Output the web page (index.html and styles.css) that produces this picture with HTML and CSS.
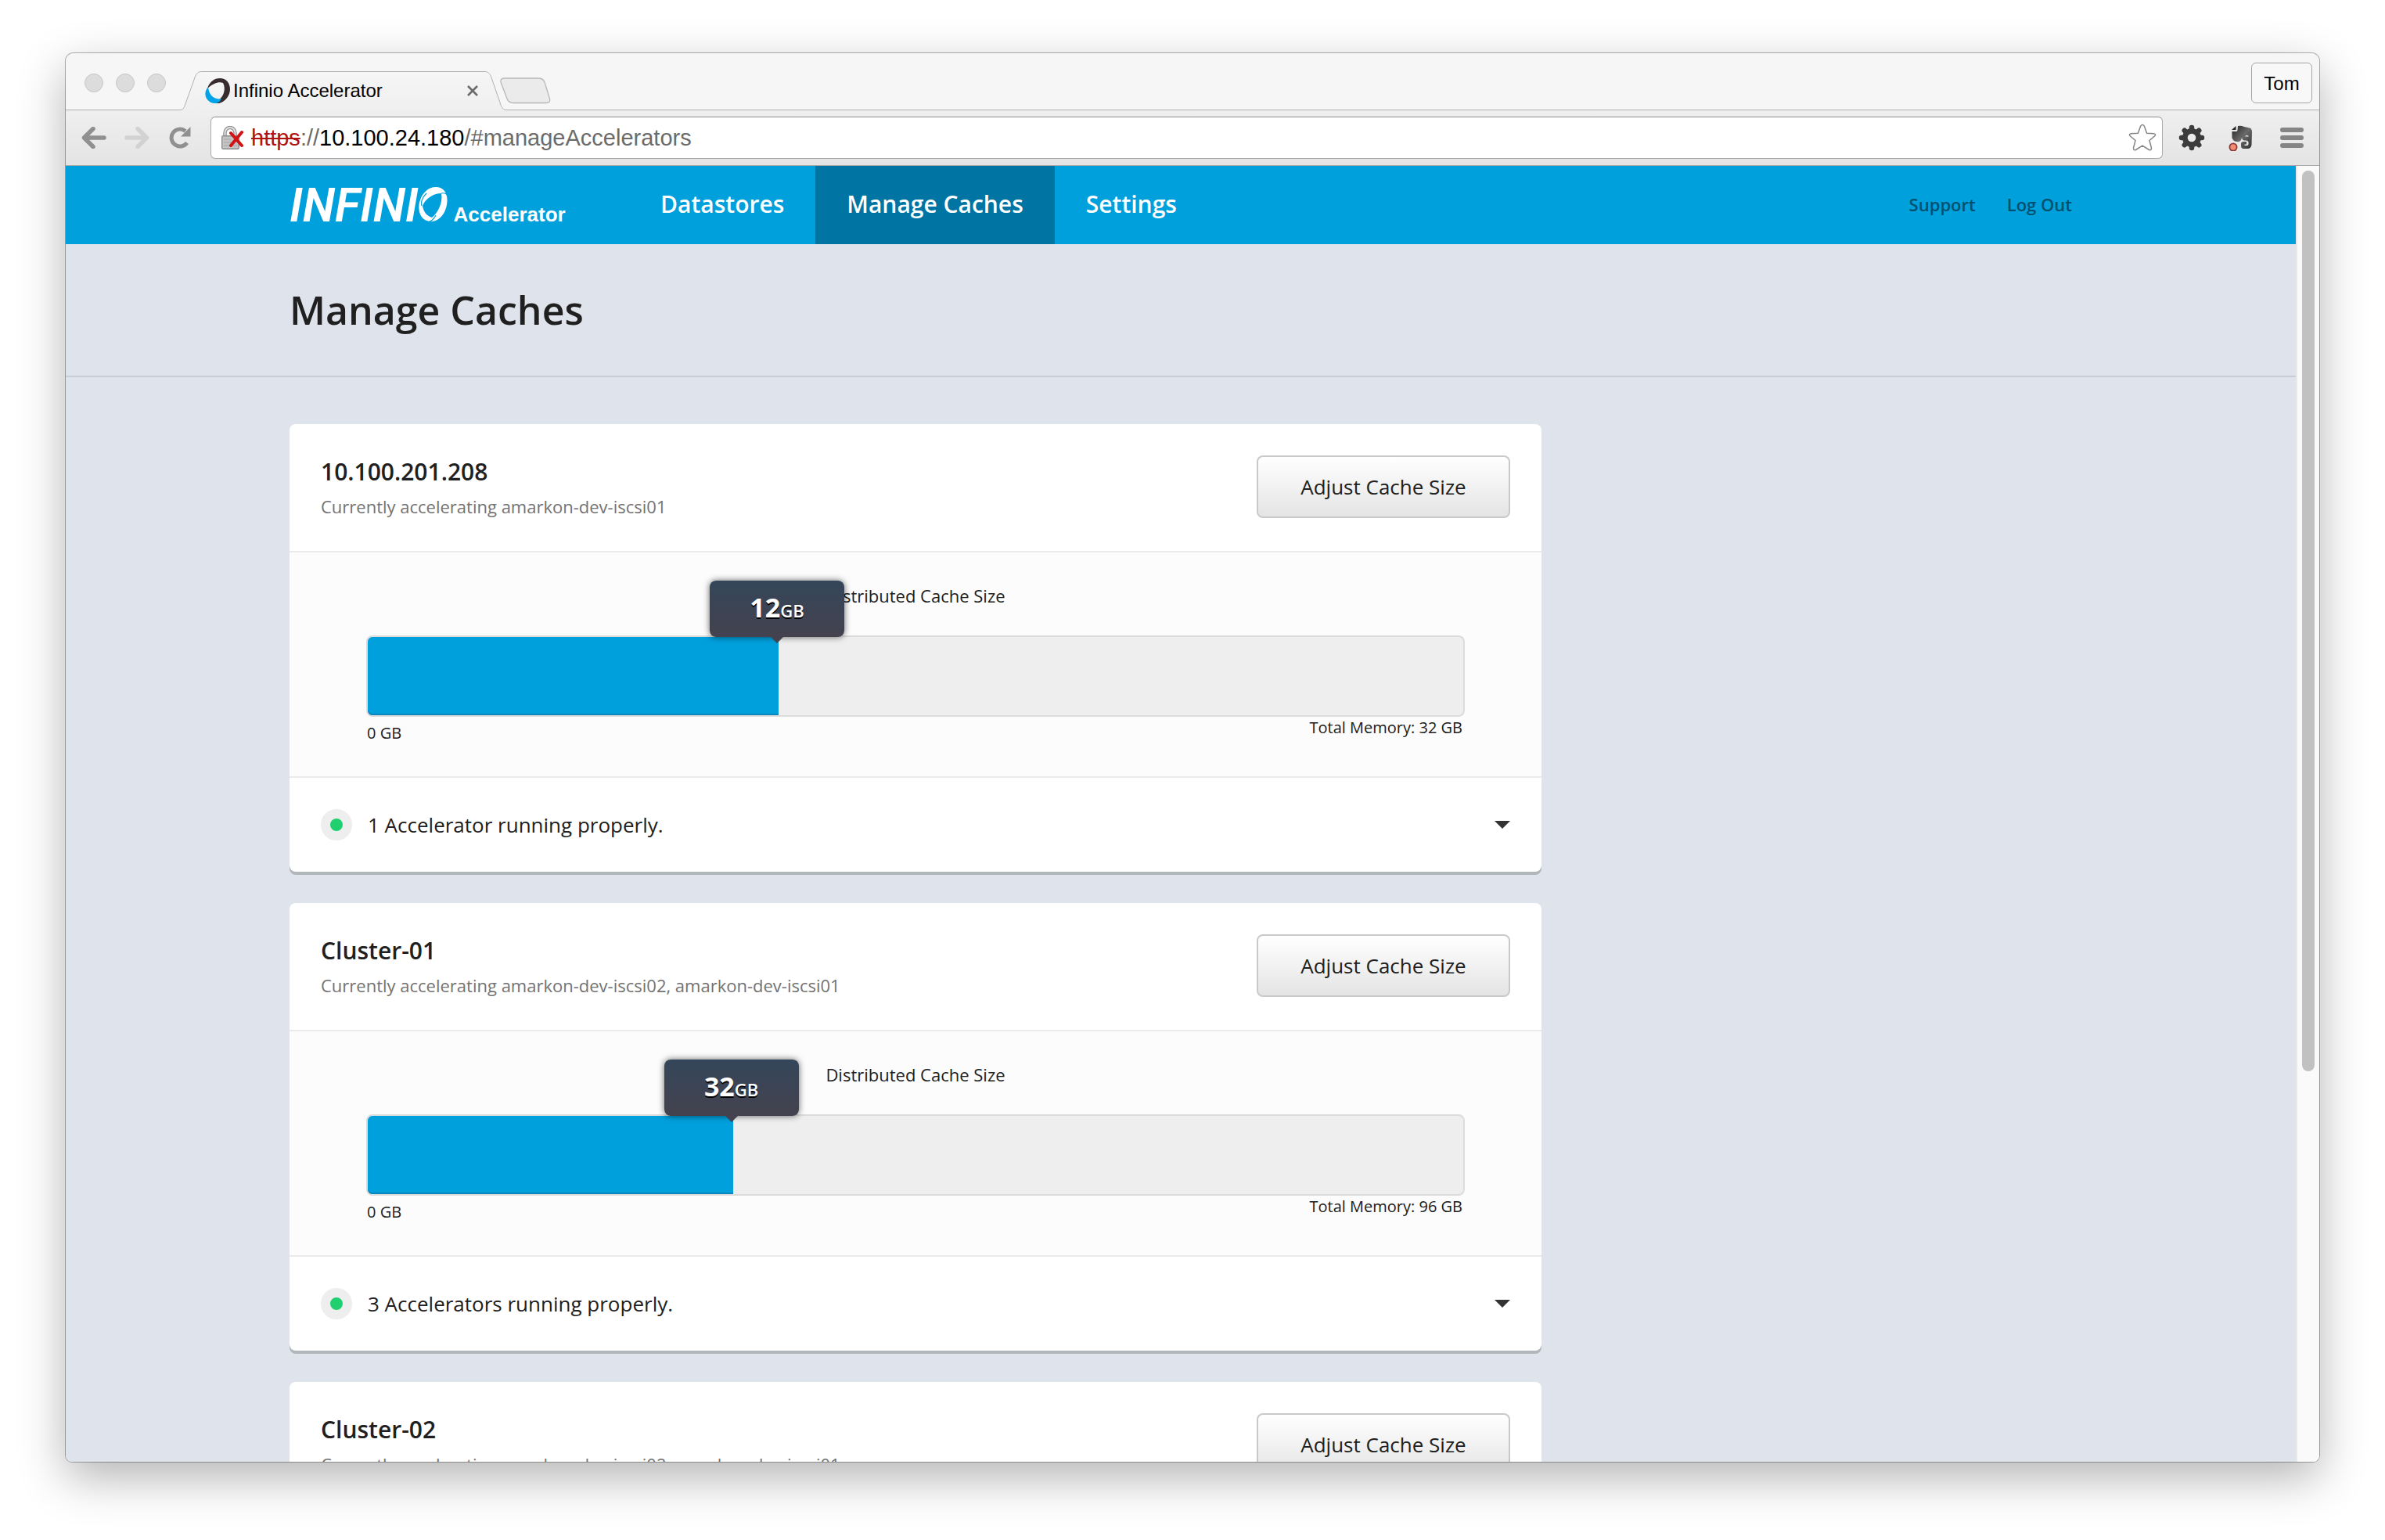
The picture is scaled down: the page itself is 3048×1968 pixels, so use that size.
FILE: index.html
```html
<!DOCTYPE html>
<html lang="en">
<head>
<meta charset="utf-8">
<title>Infinio Accelerator</title>
<link rel="stylesheet" href="styles.css">
</head>
<body>
<div class="window">
  <div class="tabstrip">
    <div class="lights"><i class="light"></i><i class="light"></i><i class="light"></i></div>
    <div class="tab">
      <svg class="tab-shape" viewBox="0 0 418 50" preserveAspectRatio="none" aria-hidden="true">
        <defs><linearGradient id="tabFill" x1="0" y1="0" x2="0" y2="1"><stop offset="0" stop-color="#f6f6f6"/><stop offset="1" stop-color="#efefef"/></linearGradient></defs>
        <path d="M0 50V49.500C4 49.500 5 47 6.500 43L19 8C21 3 23 .5 28 .5H389C394 .5 396 3 398 8L410 43C411.500 47 413 49.500 418 49.500V50Z" fill="url(#tabFill)"/>
        <path d="M0 49.500C4 49.500 5 47 6.500 43L19 8C21 3 23 .5 28 .5H389C394 .5 396 3 398 8L410 43C411.500 47 413 49.500 418 49.500" fill="none" stroke="#b0b0b0"/>
      </svg>
      <div class="tab-content">
        <svg class="favicon" viewBox="0 0 32 32" aria-hidden="true">
          <path d="M3 13C6 4 12 0 19 0C27 0 32 6 32 14C32 22 26 30 18 32H13L17 28C24 24 27 13 23 6C18 4 11 6 3 13Z" fill="#372b2d"/>
          <path d="M4 11C-2 18 0 26 6 30C10 33 15 32 17 31C19 30 20 28 21 26C12 28 5 22 4 11Z" fill="#00a3e8"/>
        </svg>
        <span class="tab-title">Infinio Accelerator</span>
        <button class="tab-close" aria-label="Close tab"><svg viewBox="0 0 14 14"><path d="M1 1L13 13M13 1L1 13" stroke="#6b6b6b" stroke-width="2.600"/></svg></button>
      </div>
    </div>
    <button class="new-tab" aria-label="New tab"><svg viewBox="0 0 66 34"><path d="M7 1H50Q56 1 58 6L64.500 27Q66 32.500 60 32.500H18Q12 32.500 10 27L2 6Q1 1 7 1Z" fill="#ebebeb" stroke="#b8b8b8" stroke-width="1.300"/></svg></button>
    <button class="profile">Tom</button>
  </div>

  <div class="toolbar">
    <button class="tool" aria-label="Back"><svg viewBox="0 0 32 28"><path d="M15 2.500L3.500 14L15 25.500M4 14H29" fill="none" stroke="#909090" stroke-width="5.500" stroke-linecap="round" stroke-linejoin="round"/></svg></button>
    <button class="tool" aria-label="Forward"><svg viewBox="0 0 32 28"><path d="M17 2.500L28.500 14L17 25.500M28 14H3" fill="none" stroke="#d2d2d2" stroke-width="5.500" stroke-linecap="round" stroke-linejoin="round"/></svg></button>
    <button class="tool" aria-label="Reload"><svg viewBox="0 0 32 28"><path d="M25 20.500A11 11 0 1 1 23 5.500" fill="none" stroke="#909090" stroke-width="5"/><path d="M29.500 0V12.500H17Z" fill="#909090"/></svg></button>
    <div class="omnibox">
      <svg class="lock" viewBox="0 0 28 30" aria-hidden="true">
        <path d="M4.500 13V9A6.500 7 0 0 1 17.500 9V13" fill="none" stroke="#8d8d8d" stroke-width="4.500"/>
        <path d="M4.500 13V9A6.500 7 0 0 1 17.500 9V13" fill="none" stroke="#e2e2e2" stroke-width="2"/>
        <rect x=".7" y="12.700" width="21.600" height="16.600" rx="1.500" fill="#c4c4c4" stroke="#8d8d8d" stroke-width="1.400"/>
        <path d="M3 17H12M3 21H12M3 25H20" stroke="#b0b0b0" stroke-width="1.500"/>
        <path d="M12 9L26 25M26 8L12 25" stroke="#d01414" stroke-width="4" stroke-linecap="round"/>
      </svg>
      <div class="url" role="textbox" aria-label="Address"><s class="scheme">https</s>://<b class="host">10.100.24.180</b>/#manageAccelerators</div>
      <button class="star" aria-label="Bookmark"><svg viewBox="0 0 36 36"><path d="M18 1.500Q19.800 1.500 20.500 3.500L23.600 12.300L32.500 12.800Q36 13.500 33.500 16L27 21.500L29.500 31Q29.500 34.800 26.500 33.500L18 28.200L9.500 33.500Q6.500 34.800 6.500 31L9 21.500L2.500 16Q0 13.500 3.500 12.800L12.400 12.300L15.500 3.500Q16.200 1.500 18 1.500Z" fill="#fff" stroke="#858585" stroke-width="1.500"/></svg></button>
    </div>
    <button class="ext" aria-label="Settings extension"><svg viewBox="0 0 34 34"><g stroke="#3c3c3c" stroke-width="6.500" stroke-linecap="round"><path d="M17 4V30M4 17H30M7.800 7.800L26.200 26.200M26.200 7.800L7.800 26.200"/></g><circle cx="17" cy="17" r="12" fill="#3c3c3c"/><circle cx="17" cy="17" r="5.300" fill="#ebebeb"/></svg></button>
    <button class="ext" aria-label="Evernote"><svg viewBox="2 0 34 34">
      <defs><linearGradient id="eleph" x1="0" x2="1" y1="0" y2="1"><stop offset="0" stop-color="#222"/><stop offset=".5" stop-color="#6a6a6a"/><stop offset="1" stop-color="#303030"/></linearGradient></defs>
      <path d="M14 2Q18 1 22 3L29 4.500Q32 5 32 10L31.500 26Q31 31 26 31H21Q18 31 18 27V24.500Q18 22 21 22H25V25.500H22.500V27H25.500Q28 27 27.500 23Q27 20 23 20.500Q20 21 19 17Q18 23 13 22Q8 22 6.500 17V9H12Q13.500 9 13.500 7Z" fill="url(#eleph)"/>
      <path d="M11.500 2V7H6Z" fill="#222"/><path d="M23 15.500Q25.500 12 28 15.500Z" fill="#eee"/>
      <circle cx="8" cy="29" r="4.600" fill="#f48a72" stroke="#8a3a34" stroke-width="1.800"/>
    </svg></button>
    <button class="ext" aria-label="Menu"><svg viewBox="0 0 34 34"><path d="M5 7H29M5 17H29M5 27H29" stroke="#858585" stroke-width="6" stroke-linecap="round"/></svg></button>
  </div>

  <div class="viewport">
    <div class="page">
      <header class="site-header">
        <div class="container site-bar">
          <a class="logo" href="#home">
            <span class="logo-name">INFINI</span>
            <svg class="logo-mark" viewBox="0 0 37 44" role="img" aria-label="O">
              <path fill-rule="evenodd" fill="#fff" d="M22 0C32 0 37 8 36.500 18C36 32 27 44 16 44C5 44 0 35 .3 25C1 12 10 0 22 0ZM29 8C20 8 9 14 5 24C6 31 10 37 17 39C25 33 31 20 29 8Z"/>
              <path d="M4 24Q2 16 10 8M29 8Q34 7 36.500 10M22 36Q19 42 14 44" fill="none" stroke="#00a0dd" stroke-width="1.200"/>
            </svg>
            <span class="logo-product">Accelerator</span>
          </a>
          <nav class="nav">
            <a class="nav-link" href="#datastores">Datastores</a>
            <a class="nav-link nav-link-active" href="#manageAccelerators">Manage Caches</a>
            <a class="nav-link" href="#settings">Settings</a>
          </nav>
          <div class="account">
            <a class="account-link" href="#support">Support</a>
            <a class="account-link" href="#logout">Log Out</a>
          </div>
        </div>
      </header>
      <div class="page-head"><div class="container"><h1 class="page-title">Manage Caches</h1></div></div>
      <main class="container cards">
        <section class="card">
          <div class="card-head">
            <div><h2 class="card-title">10.100.201.208</h2><p class="card-sub">Currently accelerating amarkon-dev-iscsi01</p></div>
            <button class="btn">Adjust Cache Size</button>
          </div>
          <div class="card-body">
            <div class="bar-label">Distributed Cache Size</div>
            <div class="bar"><div class="fill" style="width:37.5%"><div class="tip"><span class="tip-value">12</span><span class="tip-unit">GB</span></div></div></div>
            <div class="scale"><span class="scale-min">0 GB</span><span class="scale-max">Total Memory: 32 GB</span></div>
          </div>
          <button class="status"><span class="dot"></span><span>1 Accelerator running properly.</span><span class="caret"></span></button>
        </section>
        <section class="card">
          <div class="card-head">
            <div><h2 class="card-title">Cluster-01</h2><p class="card-sub">Currently accelerating amarkon-dev-iscsi02, amarkon-dev-iscsi01</p></div>
            <button class="btn">Adjust Cache Size</button>
          </div>
          <div class="card-body">
            <div class="bar-label">Distributed Cache Size</div>
            <div class="bar"><div class="fill" style="width:33.33%"><div class="tip"><span class="tip-value">32</span><span class="tip-unit">GB</span></div></div></div>
            <div class="scale"><span class="scale-min">0 GB</span><span class="scale-max">Total Memory: 96 GB</span></div>
          </div>
          <button class="status"><span class="dot"></span><span>3 Accelerators running properly.</span><span class="caret"></span></button>
        </section>
        <section class="card">
          <div class="card-head">
            <div><h2 class="card-title">Cluster-02</h2><p class="card-sub">Currently accelerating amarkon-dev-iscsi02, amarkon-dev-iscsi01</p></div>
            <button class="btn">Adjust Cache Size</button>
          </div>
        </section>
      </main>
    </div>
    <div class="scrollbar"><div class="thumb"></div></div>
  </div>
</div>
</body>
</html>
```
FILE: styles.css
```css
* { box-sizing: border-box; }

body {
  margin: 0;
  height: 100vh;
  padding: 68px 84px 100px;
  display: flex;
  background: #fff;
  color: #202020;
  font-family: "Open Sans", sans-serif;
  overflow: hidden;
}
button { margin: 0; padding: 0; border: 0; background: none; color: inherit; font: inherit; }
button svg { display: block; width: 100%; height: 100%; }
a { color: inherit; text-decoration: none; }
h1, h2, p { margin: 0; }

/* Browser window */
.window {
  flex: 1;
  min-width: 0;
  display: flex;
  flex-direction: column;
  border-radius: 10px 10px 8px 8px;
  overflow: hidden;
  box-shadow: 0 0 0 1px rgba(0, 0, 0, .3), 0 20px 60px rgba(0, 0, 0, .3);
}
.tabstrip {
  flex: none;
  height: 73px;
  display: flex;
  align-items: flex-end;
  padding: 0 9px 0 24px;
  background: #f6f6f6;
  border-bottom: 1px solid #b0b0b0;
  font-family: "Liberation Sans", sans-serif;
  font-size: 24px;
  color: #000;
}
.lights { display: flex; gap: 16px; margin: 0 18px 22px 0; }
.light { width: 24px; height: 24px; border: 1px solid #c6c6c6; border-radius: 50%; background: #dcdcdc; }
.tab { display: grid; width: 418px; height: 50px; margin-bottom: -1px; }
.tab-shape { grid-area: 1 / 1; width: 100%; height: 100%; }
.tab-content { grid-area: 1 / 1; display: flex; align-items: center; padding: 0 37px 0 32px; }
.favicon { width: 32px; height: 32px; margin-right: 4px; }
.tab-title { flex: 1; line-height: 32px; }
.tab-close { width: 14px; height: 14px; }
.new-tab { width: 66px; height: 34px; margin: 0 0 7px -10px; }
.profile {
  width: 78px;
  height: 52px;
  margin: 0 0 8px auto;
  padding-top: 2px;
  border: 1px solid #a6a6a6;
  border-radius: 6px;
  background: #f8f8f8;
}

.toolbar {
  flex: none;
  height: 71px;
  display: flex;
  align-items: center;
  padding: 0 18px 0 20px;
  background: linear-gradient(#efefef, #e4e4e4);
  border-bottom: 1px solid #a9a9a9;
}
.tool { width: 32px; height: 28px; margin-right: 23px; }
.omnibox {
  flex: 1;
  height: 54px;
  display: flex;
  align-items: center;
  padding: 0 7px 0 13px;
  border: 1px solid #aaa;
  border-top-color: #8f8f8f;
  border-radius: 6px;
  background: #fff;
}
.lock { width: 28px; height: 30px; margin-right: 10px; }
.url { flex: 1; font: 29px/40px "Liberation Sans", sans-serif; color: #6b6b6b; }
.scheme { color: #b01212; }
.host { color: #000; font-weight: 400; }
.star { width: 36px; height: 36px; }
.ext { width: 34px; height: 34px; margin-left: 30px; }
.omnibox + .ext { margin-left: 20px; }

/* Page viewport */
.viewport { flex: 1; min-height: 0; display: flex; overflow: hidden; background: #dfe4ec; }
.page { flex: 1; min-width: 0; }
.scrollbar { width: 30px; padding: 6px 6px; border-left: 2px solid #e8e8e8; background: #fafafa; }
.thumb { width: 16px; height: 70%; border-radius: 8px; background: #c1c1c1; }
.container { max-width: 2278px; margin: 0 auto; }

.site-header { background: #00a0dd; color: #fff; }
.site-bar { display: flex; height: 100px; }
.logo { flex: 0 0 434px; display: flex; align-items: baseline; line-height: 102px; }
.logo-name { font-family: Roboto, sans-serif; font-size: 60px; font-weight: 600; font-style: italic; }
.logo-mark { width: 37px; height: 44px; }
.logo-product { margin-left: 8px; font-family: "Liberation Sans", sans-serif; font-size: 26px; font-weight: 700; }
.nav { display: flex; font-size: 30px; font-weight: 600; line-height: 98px; }
.nav-link { padding: 0 40px 2px; }
.nav-link-active { background: #0074a2; }
.account { display: flex; gap: 40px; margin-left: auto; font-size: 22px; font-weight: 600; line-height: 98px; color: #00506f; }

.page-head { border-bottom: 2px solid #c8cdd5; }
.page-title { font-size: 50px; font-weight: 600; line-height: 168px; }

.cards { padding-top: 60px; }
.card {
  max-width: 1600px;
  margin-bottom: 40px;
  border-radius: 8px;
  background: #fff;
  box-shadow: 0 4px 0 #b0b6ba;
}
.card-head { display: flex; justify-content: space-between; align-items: flex-start; padding: 40px; }
.card-title { font-size: 30px; font-weight: 600; line-height: 42px; }
.card-sub { margin-top: 6px; font-size: 22px; line-height: 34px; color: #737373; }
.btn {
  width: 324px;
  height: 80px;
  border: 2px solid #c9c9c9;
  border-radius: 8px;
  background: linear-gradient(#fff, #e4e4e4);
  font-size: 26px;
}
.card-body {
  padding: 40px 98px 34px;
  border: solid #ebebeb;
  border-width: 2px 0;
  background: #fcfcfc;
}
.bar-label { margin-bottom: 36px; text-align: center; font-size: 22px; line-height: 30px; }
.bar { height: 104px; border: 2px solid #dcdcdc; border-radius: 8px; background: #eee; }
.fill {
  position: relative;
  height: 100%;
  border-radius: 6px 0 0 6px;
  background: #00a0dd;
  box-shadow: inset 0 -2px 0 #0a87bd;
}
.tip {
  position: absolute;
  right: -84px;
  bottom: 100%;
  width: 172px;
  height: 72px;
  display: flex;
  justify-content: center;
  align-items: baseline;
  border-radius: 8px;
  background: linear-gradient(#34465a, #44424e);
  box-shadow: 0 0 8px rgba(0, 0, 0, .6);
  color: #fff;
  font-weight: 600;
  line-height: 68px;
  text-shadow: 0 2px 0 #000;
}
.tip::after {
  content: "";
  position: absolute;
  top: 100%;
  left: 78px;
  border: 8px solid transparent;
  border-top-color: #44424e;
  border-bottom: 0;
}
.tip-value { font-size: 34px; font-weight: 700; }
.tip-unit { font-size: 22px; }
.scale { display: flex; justify-content: space-between; align-items: flex-start; padding: 0 3px 0 1px; font-size: 20px; }
.scale-min { line-height: 42px; }
.scale-max { line-height: 28px; }

.status { width: 100%; display: flex; align-items: center; gap: 20px; padding: 40px; font-size: 26px; line-height: 40px; }
.dot { width: 40px; height: 40px; border: 12px solid #eee; border-radius: 50%; background: #20d070; }
.caret { margin-left: auto; border: 10px solid transparent; border-top-color: #333; border-bottom: 0; }
```
